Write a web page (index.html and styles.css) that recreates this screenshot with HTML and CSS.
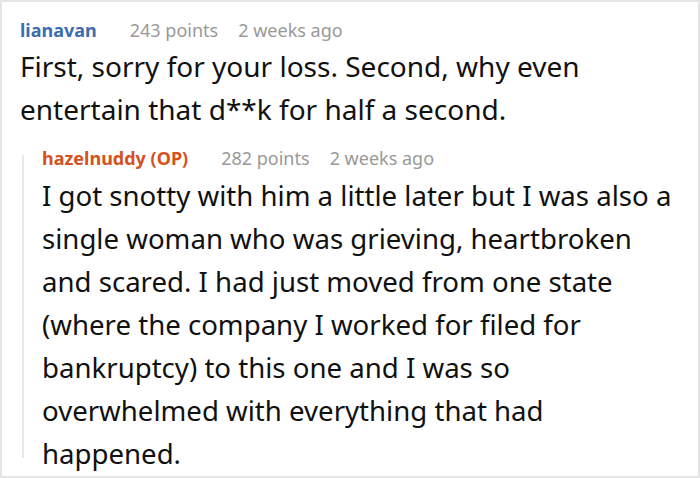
FILE: index.html
```html
<!DOCTYPE html>
<html>
<head>
<meta charset="utf-8">
<link rel="stylesheet" href="styles.css">
</head>
<body>
<div class="frame">
  <div class="comment">
    <div class="meta">
      <span class="author">lianavan</span>
      <span class="info">243 points</span>
      <span class="info">2 weeks ago</span>
    </div>
    <p class="body">First, sorry for your loss. Second, why even<br>entertain that d**k for half a second.</p>
    <div class="reply">
      <div class="meta">
        <span class="author op">hazelnuddy (OP)</span>
        <span class="info">282 points</span>
        <span class="info">2 weeks ago</span>
      </div>
      <p class="body">I got snotty with him a little later but I was also a<br>single woman who was grieving, heartbroken<br>and scared. I had just moved from one state<br>(where the company I worked for filed for<br>bankruptcy) to this one and I was so<br>overwhelmed with everything that had<br>happened.</p>
    </div>
  </div>
</div>
</body>
</html>
```
FILE: styles.css
```css
html, body {
  margin: 0;
  padding: 0;
  background: #fff;
}
.frame {
  width: 700px;
  height: 478px;
  box-sizing: border-box;
  border: 2px solid #e5e5e5;
  overflow: hidden;
  font-family: "Noto Sans", sans-serif;
  color: #111;
}
.comment {
  padding: 16px 0 0 18px;
}
.meta {
  display: flex;
  gap: 20px;
  font-size: 18px;
  line-height: 24px;
  white-space: nowrap;
}
.author {
  font-weight: bold;
  color: #3b6db3;
  margin-right: 13px;
}
.author.op {
  color: #d4511d;
}
.info {
  color: #999;
}
.body {
  margin: 3px 0 0 0;
  font-size: 28px;
  line-height: 43px;
  white-space: nowrap;
}
.reply {
  position: relative;
  margin: 15px 0 0 2px;
  padding-left: 20px;
}
.reply::before {
  content: "";
  position: absolute;
  left: 0;
  top: 9px;
  bottom: 17px;
  width: 2px;
  background: #e8e8e8;
}
.reply .body {
  margin-top: 4px;
  font-size: 27.6px;
}
```
